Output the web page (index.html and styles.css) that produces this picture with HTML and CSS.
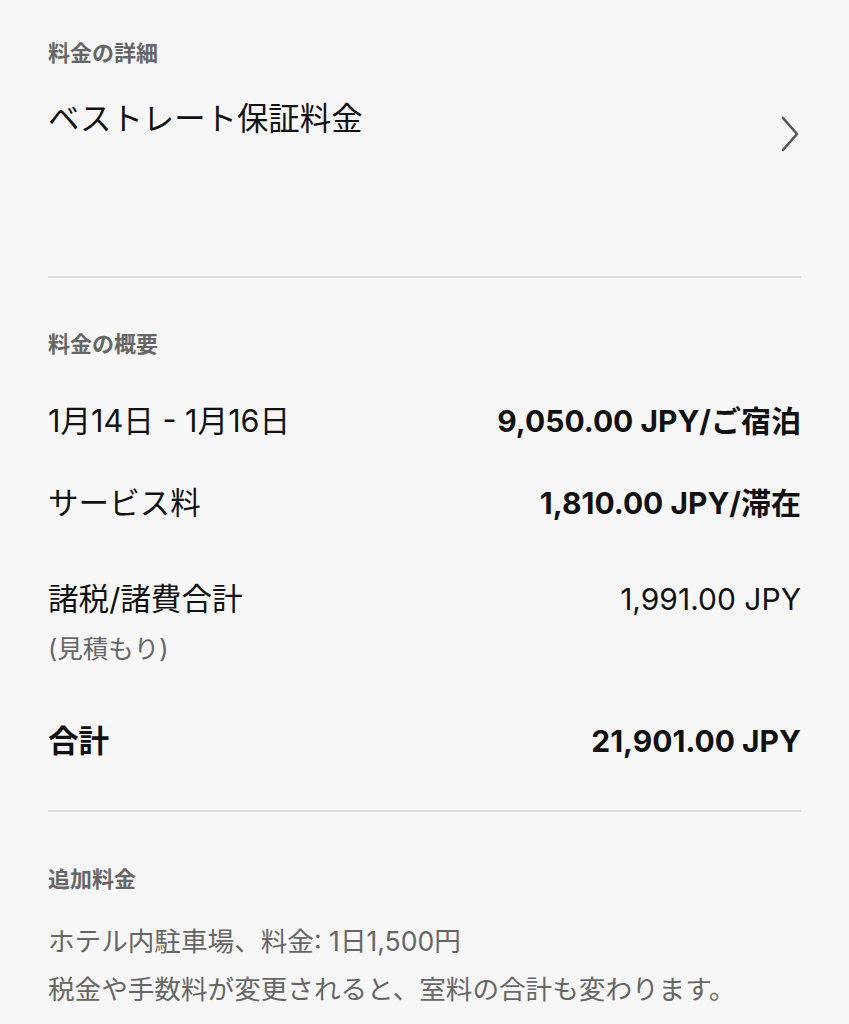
FILE: index.html
```html
<!DOCTYPE html>
<html lang="ja">
<head>
    <meta charset="UTF-8">
    <meta name="viewport" content="width=device-width, initial-scale=1.0">
    <title>料金の詳細</title>
    <link rel="stylesheet" href="styles.css">
</head>
<body>
    <div class="page">
        <div class="section detail">
            <h2 class="section-title">料金の詳細</h2>
            <div class="rate-plan">
                <span class="rate-name">ベストレート保証料金</span>
                <svg class="chevron" width="20" height="36" viewBox="0 0 20 36">
                    <polyline points="3,2 17,18 3,34" fill="none" stroke="#555" stroke-width="2.6" stroke-linecap="round" stroke-linejoin="round"/>
                </svg>
            </div>
        </div>

        <div class="divider"></div>

        <div class="section summary">
            <h2 class="section-title">料金の概要</h2>

            <div class="price-row">
                <span class="label">1月14日 - 1月16日</span>
                <span class="value strong">9,050.00 JPY/ご宿泊</span>
            </div>

            <div class="price-row">
                <span class="label">サービス料</span>
                <span class="value strong">1,810.00 JPY/滞在</span>
            </div>

            <div class="price-row taxes">
                <div>
                    <span class="label">諸税/諸費合計</span>
                    <div class="label-note">(見積もり)</div>
                </div>
                <span class="value">1,991.00 JPY</span>
            </div>

            <div class="price-row total">
                <span class="label strong">合計</span>
                <span class="value strong">21,901.00 JPY</span>
            </div>
        </div>

        <div class="divider"></div>

        <div class="section extras">
            <h2 class="section-title">追加料金</h2>
            <p class="note">ホテル内駐車場、料金: 1日1,500円</p>
            <p class="note">税金や手数料が変更されると、室料の合計も変わります。</p>
        </div>
    </div>
</body>
</html>
```

FILE: styles.css
```css
* {
    margin: 0;
    padding: 0;
    box-sizing: border-box;
}

body {
    font-family: 'Inter', 'Noto Sans CJK JP', sans-serif;
    background: #f7f7f7;
    color: #111;
}

.page {
    padding: 0 48px;
}

.section-title {
    font-size: 22px;
    line-height: 30px;
    font-weight: 700;
    color: #666;
}

.detail {
    padding-top: 38px;
    padding-bottom: 124px;
}

.rate-plan {
    display: flex;
    justify-content: space-between;
    align-items: flex-start;
    margin-top: 31px;
}

.rate-name {
    font-size: 31.4px;
    line-height: 40px;
}

.chevron {
    margin-top: 17px;
    margin-right: 1px;
}

.divider {
    height: 2px;
    background: #dedede;
}

.summary {
    padding-top: 51px;
    padding-bottom: 49px;
}

.price-row {
    display: flex;
    justify-content: space-between;
    align-items: flex-start;
    margin-top: 42px;
    font-size: 30px;
    line-height: 40px;
}

.price-row.taxes {
    margin-top: 56px;
}

.price-row.total {
    margin-top: 56px;
}

.label {
    font-size: 30.6px;
}

.strong {
    font-weight: 700;
}

.label-note {
    font-size: 25.5px;
    line-height: 32px;
    color: #666;
    margin-top: 14px;
}

.extras {
    padding-top: 52px;
    padding-bottom: 20px;
}

.extras .section-title {
    margin-bottom: 23px;
}

.note {
    font-size: 26.6px;
    line-height: 48px;
    color: #666;
}
```
